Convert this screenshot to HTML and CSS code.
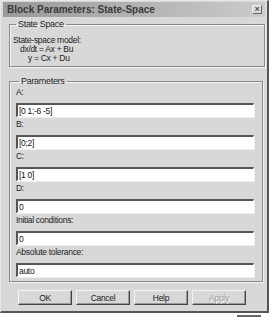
FILE: index.html
```html
<!DOCTYPE html>
<html lang="en">
<head>
    <meta charset="UTF-8">
    <title>Block Parameters: State-Space</title>
    <link rel="stylesheet" href="styles.css">
</head>
<body>
    <div class="window">
        <div class="titlebar">
            <span class="title">Block Parameters: State-Space</span>
            <span class="close">&#215;</span>
        </div>

        <!-- description group -->
        <fieldset class="group info">
            <legend>State Space</legend>
            <p>State-space model:</p>
            <p class="eq1">dx/dt = Ax + Bu</p>
            <p class="eq2">y = Cx + Du</p>
        </fieldset>

        <!-- parameter fields -->
        <fieldset class="group params">
            <legend>Parameters</legend>
            <label>A:</label>
            <input type="text" value="[0 1;-6 -5]">
            <label>B:</label>
            <input type="text" value="[0;2]">
            <label>C:</label>
            <input type="text" value="[1 0]">
            <label>D:</label>
            <input type="text" value="0">
            <label>Initial conditions:</label>
            <input type="text" value="0">
            <label>Absolute tolerance:</label>
            <input type="text" value="auto">
        </fieldset>

        <div class="buttons">
            <button>OK</button>
            <button>Cancel</button>
            <button>Help</button>
            <button class="disabled">Apply</button>
        </div>
    </div>
    <div class="shadow"></div>
</body>
</html>
```

FILE: styles.css
```css
* {
    margin: 0;
    padding: 0;
    box-sizing: border-box;
}
body {
    background: #fff;
    font-family: 'Liberation Sans', Arial, sans-serif;
    font-size: 8.5px;
    letter-spacing: -0.3px;
    color: #222;
}
.window {
    width: 269px;
    height: 313px;
    background: #d8d8d8;
    border-top: 1px solid #e6e6e6;
    border-left: 1px solid #e6e6e6;
    border-right: 2px solid #555;
    border-bottom: 2px solid #555;
    padding: 1px 2px 0 2px;
}
.titlebar {
    height: 15px;
    background: linear-gradient(to right, #9a9a9a, #b4b4b4 55%, #cbcbcb);
    display: flex;
    align-items: center;
    justify-content: space-between;
    padding: 0 3px 0 4px;
}
.title {
    font-weight: bold;
    font-size: 10px;
    letter-spacing: 0;
    color: #3a3a3a;
}
.close {
    width: 10px;
    height: 9px;
    background: #d8d8d8;
    border: 1px solid #666;
    border-top-color: #f0f0f0;
    border-left-color: #f0f0f0;
    font-size: 9px;
    line-height: 7px;
    text-align: center;
    color: #222;
}
.group {
    border: 1px solid #8a8a8a;
    box-shadow: 1px 1px 0 #f4f4f4, inset 1px 1px 0 #f4f4f4;
    margin-left: 6px;
}
.group legend {
    padding: 0 2px;
    margin-left: 3px;
    font-size: 9px;
    line-height: 11px;
}
.info {
    width: 256px;
    height: 48px;
    margin-top: 2px;
    padding: 6px 4px 0 3px;
}
.info p {
    line-height: 9px;
}
.info .eq1 {
    padding-left: 7px;
}
.info .eq2 {
    padding-left: 15px;
}
.params {
    width: 254px;
    height: 206px;
    margin-top: 9px;
    padding: 0 0 0 6px;
    display: flex;
    flex-direction: column;
}
.params label {
    display: block;
    line-height: 11px;
    margin-top: 2px;
    margin-bottom: 5px;
}
.params legend + label {
    margin-top: 0;
}
.params input {
    width: 238px;
    height: 14px;
    background: #fff;
    border: 1px solid #fff;
    border-top: 2px solid #555;
    border-left: 2px solid #555;
    box-shadow: 1px 1px 0 #eee;
    font-family: 'Liberation Sans', Arial, sans-serif;
    font-size: 8.5px;
    letter-spacing: -0.3px;
    color: #111;
    padding: 0 1px;
    outline: none;
}
.buttons {
    display: flex;
    justify-content: center;
    gap: 4px;
    margin-top: 8px;
    padding-right: 4px;
}
.buttons button {
    width: 54px;
    height: 15px;
    background: #d8d8d8;
    border: 1px solid #444;
    border-top-color: #f4f4f4;
    border-left-color: #f4f4f4;
    box-shadow: inset -1px -1px 0 #999;
    font-family: 'Liberation Sans', Arial, sans-serif;
    font-size: 8.5px;
    letter-spacing: -0.3px;
    color: #222;
}
.buttons .disabled {
    color: #a0a0a0;
    text-shadow: 1px 1px 0 #f4f4f4;
}
.shadow {
    width: 24px;
    height: 2px;
    background: #666;
    margin: 2px 0 0 237px;
}
```
